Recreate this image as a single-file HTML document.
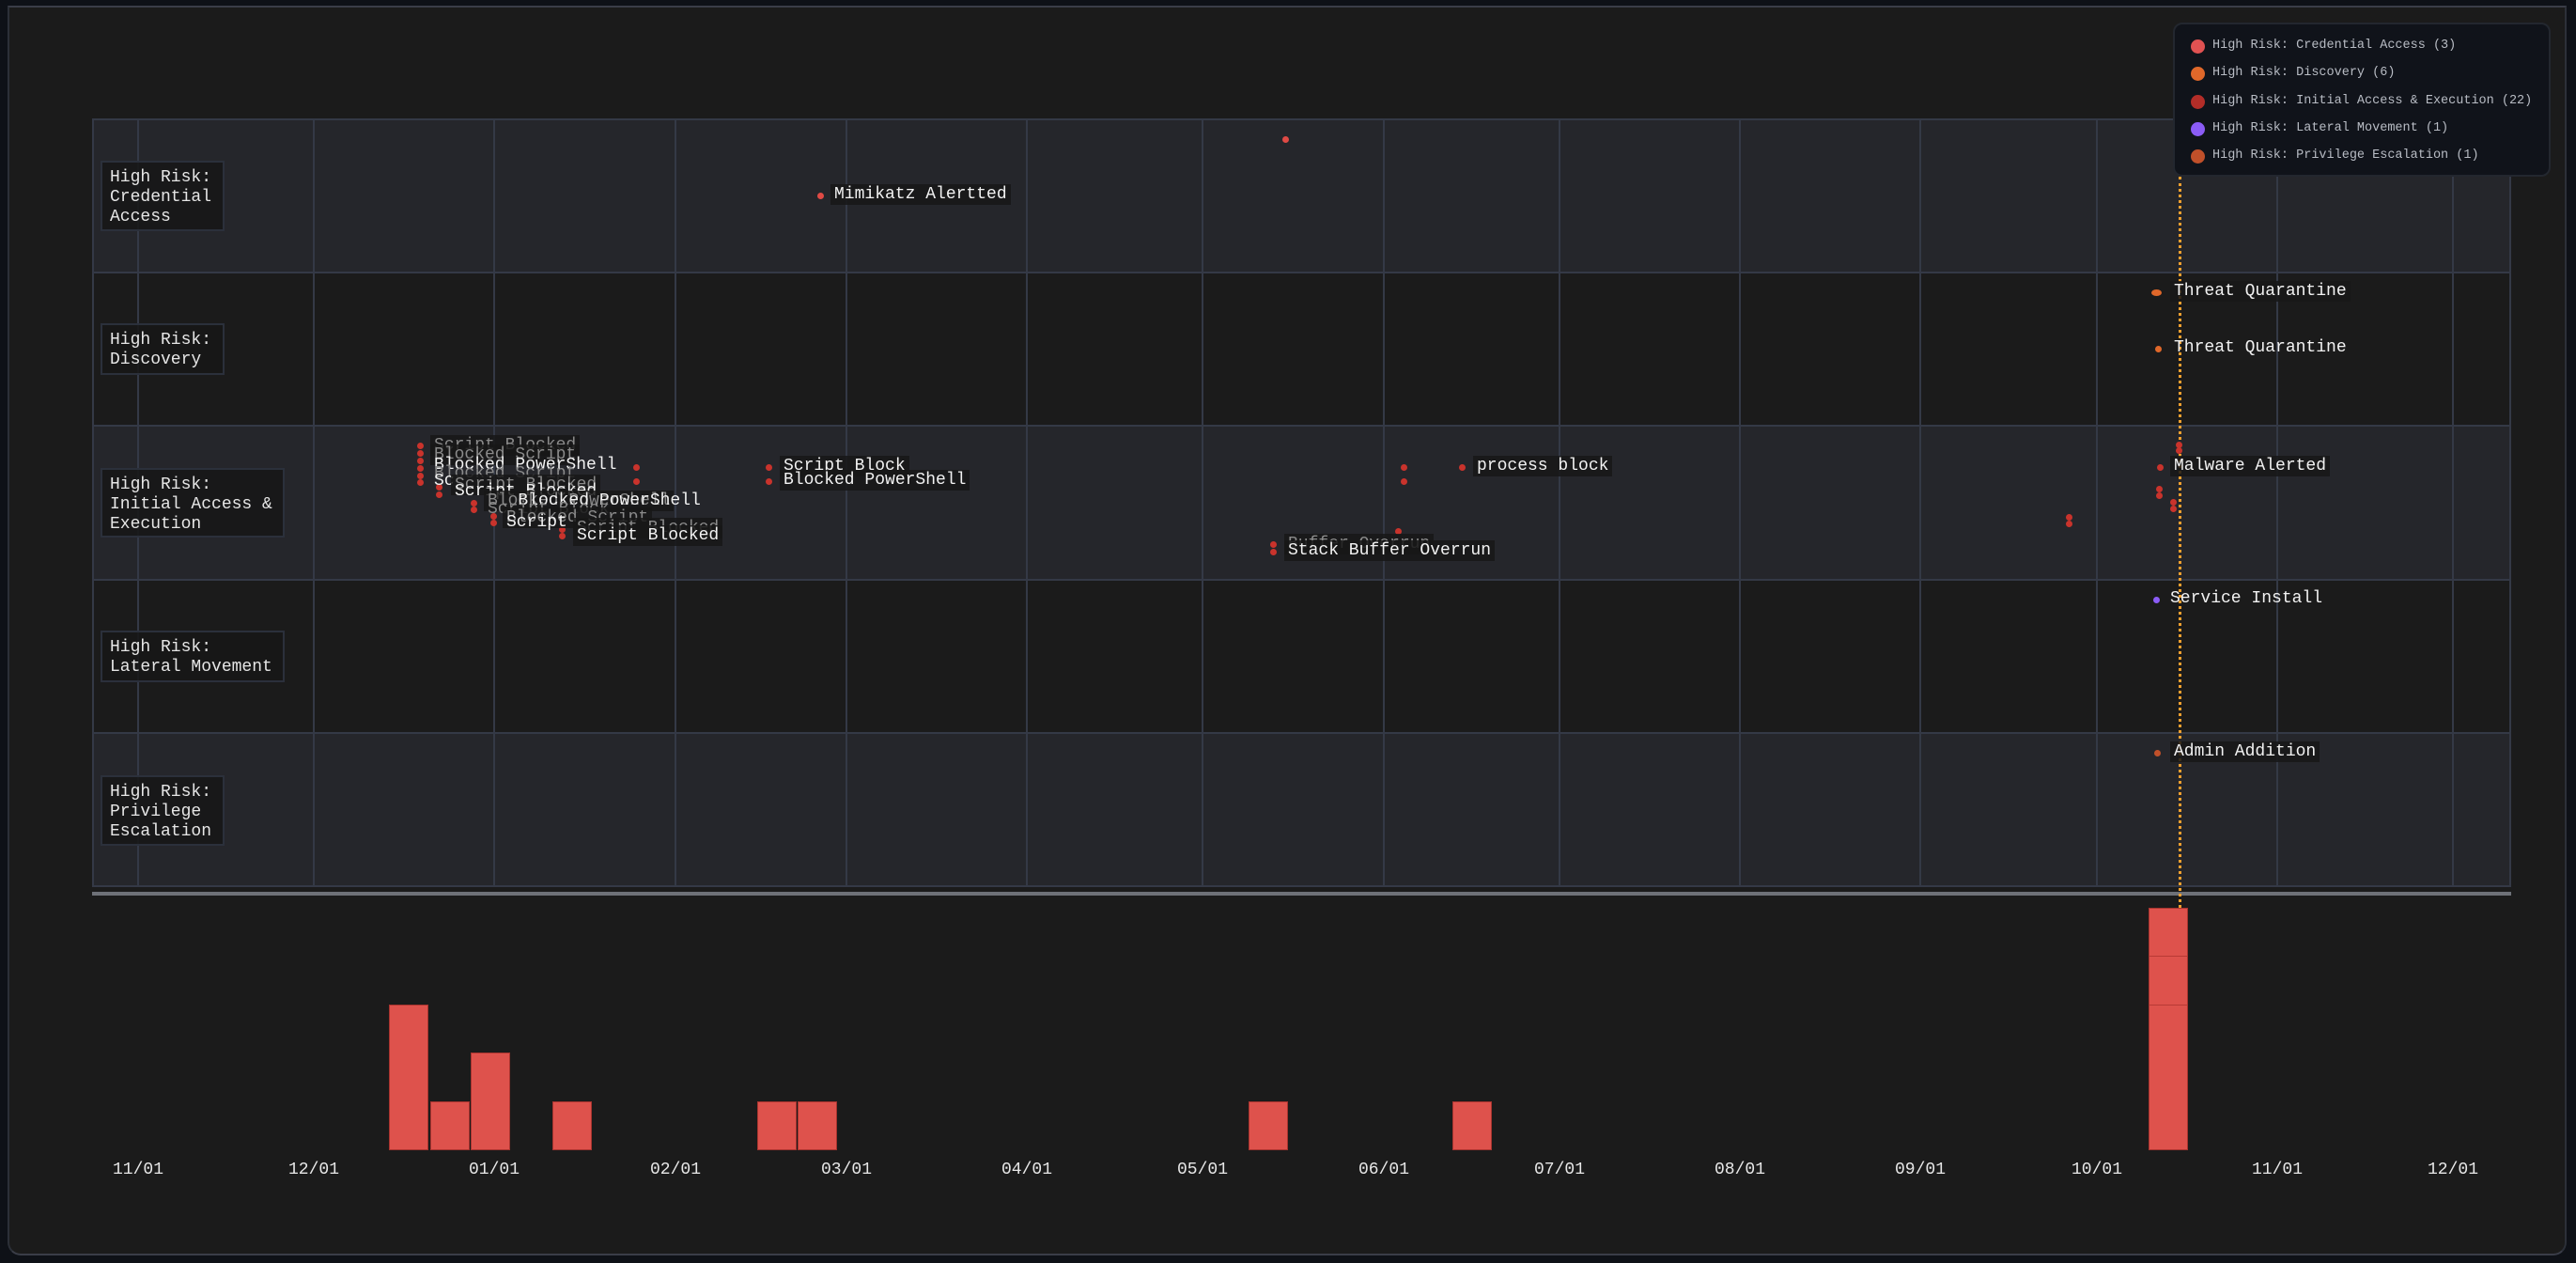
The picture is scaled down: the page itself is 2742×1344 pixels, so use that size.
<!DOCTYPE html>
<html><head><meta charset="utf-8"><style>
body{margin:0;width:2742px;height:1344px;background:#0e1117;overflow:hidden;position:relative;font-family:"Liberation Mono",monospace}
.panel{position:absolute;left:8px;top:6px;width:2724px;height:1330px;background:#1b1b1b;border-left:2px solid #2c3038;border-top:2px solid #3a3d48;border-right:2px solid #2c3038;border-bottom:2px solid #3a3d48;border-radius:0 0 14px 14px;box-sizing:border-box}
.a{position:absolute}
.row{position:absolute;left:98px;width:2575px;border-top:2px solid #343946}
.vl{position:absolute;top:126px;height:818px;width:2px;background:#343946}
.lbl{position:absolute;left:107px;background:rgba(22,22,22,0.85);border:2px solid #2b303b;color:#e6e6e6;font-size:18px;line-height:21px;padding:6px 8px;box-sizing:border-box}
.ev{position:absolute;color:#f2f2f2;font-size:18px;line-height:22px;background:rgba(24,24,24,0.85);padding:0 4px;white-space:pre}
.fd{color:#8a8a8a}
.d{position:absolute;width:7px;height:7px;border-radius:50%;background:#c9332c}
.bar{position:absolute;background:#de524c;border:1px solid #a8342f;box-sizing:border-box;bottom:120px}
.m{position:absolute;top:1233px;width:80px;margin-left:-40px;text-align:center;color:#e8e8e8;font-size:18px;line-height:24px}
.leg{position:absolute;left:2313px;top:24px;width:402px;height:164px;background:#10131a;border:2px solid #23272f;border-radius:10px;box-sizing:border-box}
.li{position:absolute;left:40px;color:#b8bcc4;font-size:13.5px;line-height:20px;white-space:pre}
.ld{position:absolute;left:17px;width:15px;height:15px;border-radius:50%}
</style></head><body>
<div class="panel"></div>
<div class="a" style="left:98px;top:126px;width:2575px;height:164px;background:#25262b"></div>
<div class="a" style="left:98px;top:453px;width:2575px;height:164px;background:#25262b"></div>
<div class="a" style="left:98px;top:780px;width:2575px;height:164px;background:#25262b"></div>
<div class="a" style="left:98px;top:126px;width:2575px;height:818px;border:2px solid #343946;box-sizing:border-box"></div>
<div class="row" style="top:289px"></div><div class="row" style="top:452px"></div><div class="row" style="top:616px"></div><div class="row" style="top:779px"></div>
<div class="vl" style="left:146px"></div><div class="vl" style="left:333px"></div><div class="vl" style="left:525px"></div><div class="vl" style="left:718px"></div><div class="vl" style="left:900px"></div><div class="vl" style="left:1092px"></div><div class="vl" style="left:1279px"></div><div class="vl" style="left:1472px"></div><div class="vl" style="left:1659px"></div><div class="vl" style="left:1851px"></div><div class="vl" style="left:2043px"></div><div class="vl" style="left:2231px"></div><div class="vl" style="left:2423px"></div><div class="vl" style="left:2610px"></div>
<div class="a" style="left:98px;top:949px;width:2575px;height:4px;background:#6e7178"></div>
<div class="lbl" style="top:171px;width:132px;height:75px">High Risk:<br>Credential<br>Access</div>
<div class="lbl" style="top:344px;width:132px;height:55px">High Risk:<br>Discovery</div>
<div class="lbl" style="top:498px;width:196px;height:74px">High Risk:<br>Initial Access &amp;<br>Execution</div>
<div class="lbl" style="top:671px;width:196px;height:55px">High Risk:<br>Lateral Movement</div>
<div class="lbl" style="top:825px;width:132px;height:75px">High Risk:<br>Privilege<br>Escalation</div>
<div class="a" style="left:2319px;top:188px;height:778px;border-left:3px dotted #f0a030"></div>
<div class="d" style="left:1365px;top:145px;background:#e04a45"></div>
<div class="d" style="left:870px;top:205px;background:#e04a45"></div><div class="ev" style="left:884px;top:196px">Mimikatz Alertted</div>
<div class="d" style="left:2290px;top:308px;width:11px;background:#e0682a"></div><div class="ev" style="left:2310px;top:299px">Threat Quarantine</div>
<div class="d" style="left:2294px;top:368px;background:#e0682a"></div><div class="ev" style="left:2310px;top:359px;background:none">Threat Quarantine</div>
<div class="d" style="left:2296px;top:494px"></div><div class="ev" style="left:2310px;top:485px">Malware Alerted</div>
<div class="d" style="left:2316px;top:470px"></div><div class="d" style="left:2316px;top:476px"></div>
<div class="d" style="left:2295px;top:517px"></div><div class="d" style="left:2295px;top:524px"></div>
<div class="d" style="left:2310px;top:531px"></div><div class="d" style="left:2310px;top:538px"></div>
<div class="d" style="left:2199px;top:547px"></div><div class="d" style="left:2199px;top:554px"></div>
<div class="d" style="left:2292px;top:635px;background:#8b5cf6"></div><div class="ev" style="left:2306px;top:626px;background:none">Service Install</div>
<div class="d" style="left:2293px;top:798px;background:#c0502a"></div><div class="ev" style="left:2310px;top:789px">Admin Addition</div>
<div class="d" style="left:1553px;top:494px"></div><div class="ev" style="left:1568px;top:485px">process block</div>
<div class="d" style="left:1491px;top:494px"></div><div class="d" style="left:1491px;top:509px"></div>
<div class="d" style="left:1485px;top:562px"></div>
<div class="d" style="left:1352px;top:576px"></div><div class="d" style="left:1352px;top:584px"></div>
<div class="ev fd" style="left:1367px;top:568px">Buffer Overrun</div>
<div class="ev" style="left:1367px;top:575px">Stack Buffer Overrun</div>
<div class="d" style="left:815px;top:494px"></div><div class="d" style="left:815px;top:509px"></div>
<div class="ev" style="left:830px;top:485px">Script Block</div>
<div class="ev" style="left:830px;top:500px">Blocked PowerShell</div>
<!-- cluster -->
<div class="d" style="left:444px;top:471px"></div><div class="d" style="left:444px;top:479px"></div><div class="d" style="left:444px;top:487px"></div><div class="d" style="left:444px;top:495px"></div><div class="d" style="left:444px;top:503px"></div><div class="d" style="left:444px;top:510px"></div>
<div class="d" style="left:464px;top:515px"></div><div class="d" style="left:464px;top:523px"></div>
<div class="d" style="left:501px;top:532px"></div><div class="d" style="left:501px;top:539px"></div>
<div class="d" style="left:522px;top:546px"></div><div class="d" style="left:522px;top:553px"></div>
<div class="d" style="left:595px;top:560px"></div><div class="d" style="left:595px;top:567px"></div>
<div class="d" style="left:674px;top:494px"></div><div class="d" style="left:674px;top:509px"></div>
<div class="ev fd" style="left:458px;top:463px">Script Blocked</div>
<div class="ev fd" style="left:458px;top:473px">Blocked Script</div>
<div class="ev" style="left:458px;top:484px;background:none">Blocked PowerShell</div>
<div class="ev fd" style="left:458px;top:493px;background:none">Blocked Script</div>
<div class="ev" style="left:458px;top:501px;background:none">Sc</div>
<div class="ev fd" style="left:480px;top:505px">Script Blocked</div>
<div class="ev" style="left:480px;top:512px;background:none">Script Blocked</div>
<div class="ev fd" style="left:515px;top:522px">Blocked PowerShell</div>
<div class="ev" style="left:515px;top:522px;background:none">   Blocked PowerShell</div>
<div class="ev fd" style="left:515px;top:531px;background:none">Script Block</div>
<div class="ev fd" style="left:535px;top:540px">Blocked Script</div>
<div class="ev" style="left:535px;top:545px;background:none">Script</div>
<div class="ev fd" style="left:610px;top:551px">Script Blocked</div>
<div class="ev" style="left:610px;top:559px">Script Blocked</div>
<!-- bars -->
<div class="bar" style="left:414px;width:42px;height:155px"></div>
<div class="bar" style="left:458px;width:42px;height:52px"></div>
<div class="bar" style="left:501px;width:42px;height:104px"></div>
<div class="bar" style="left:588px;width:42px;height:52px"></div>
<div class="bar" style="left:806px;width:42px;height:52px"></div>
<div class="bar" style="left:849px;width:42px;height:52px"></div>
<div class="bar" style="left:1329px;width:42px;height:52px"></div>
<div class="bar" style="left:1546px;width:42px;height:52px"></div>
<div class="bar" style="left:2287px;width:42px;height:258px"></div>
<div class="a" style="left:2288px;top:1017px;width:40px;height:1px;background:#b83a35"></div>
<div class="a" style="left:2288px;top:1069px;width:40px;height:1px;background:#b83a35"></div>
<div class="m" style="left:147px">11/01</div><div class="m" style="left:334px">12/01</div><div class="m" style="left:526px">01/01</div><div class="m" style="left:719px">02/01</div><div class="m" style="left:901px">03/01</div><div class="m" style="left:1093px">04/01</div><div class="m" style="left:1280px">05/01</div><div class="m" style="left:1473px">06/01</div><div class="m" style="left:1660px">07/01</div><div class="m" style="left:1852px">08/01</div><div class="m" style="left:2044px">09/01</div><div class="m" style="left:2232px">10/01</div><div class="m" style="left:2424px">11/01</div><div class="m" style="left:2611px">12/01</div>
<div class="leg">
<div class="ld" style="top:16px;background:#e05252"></div><div class="li" style="top:13px">High Risk: Credential Access (3)</div>
<div class="ld" style="top:45px;background:#e0682a"></div><div class="li" style="top:42px">High Risk: Discovery (6)</div>
<div class="ld" style="top:75px;background:#b32d28"></div><div class="li" style="top:72px">High Risk: Initial Access &amp; Execution (22)</div>
<div class="ld" style="top:104px;background:#8b5cf6"></div><div class="li" style="top:101px">High Risk: Lateral Movement (1)</div>
<div class="ld" style="top:133px;background:#c0502a"></div><div class="li" style="top:130px">High Risk: Privilege Escalation (1)</div>
</div>
</body></html>
